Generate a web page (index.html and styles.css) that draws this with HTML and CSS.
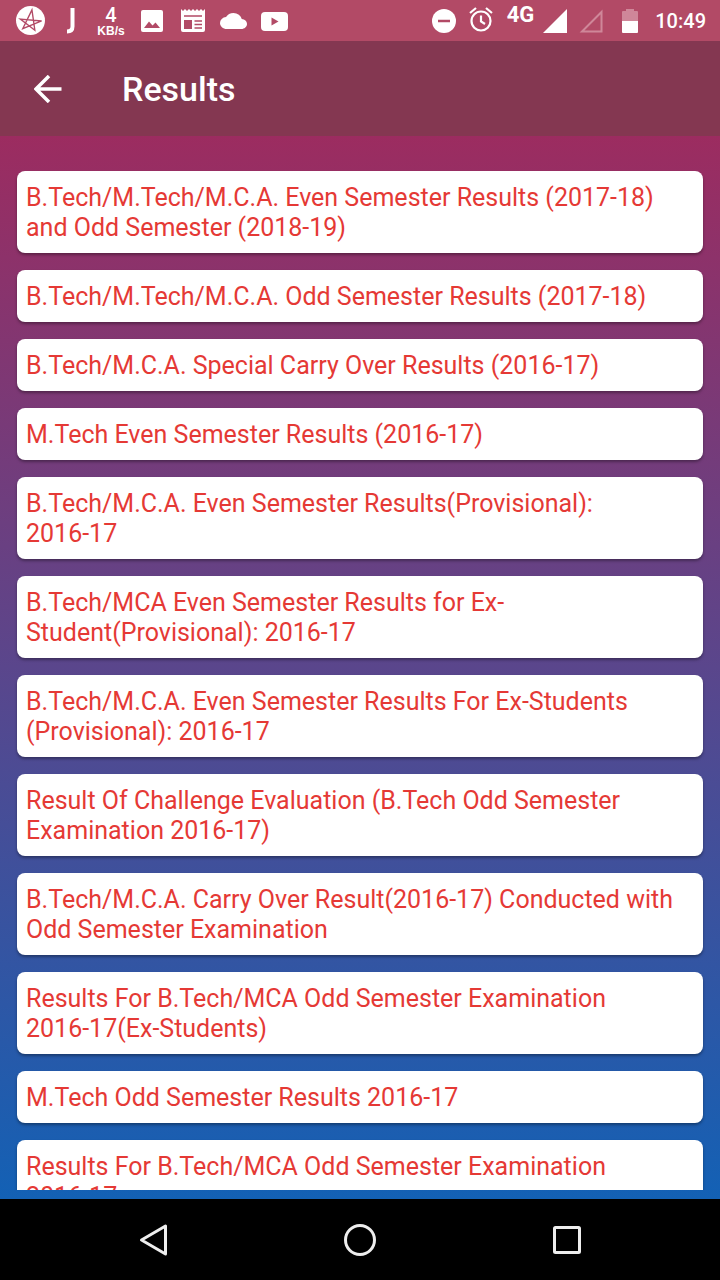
FILE: index.html
```html
<!DOCTYPE html>
<html lang="en">
<head>
<meta charset="utf-8">
<meta name="viewport" content="width=device-width, initial-scale=1">
<title>Results</title>
<link rel="stylesheet" href="styles.css">
</head>
<body>
<div class="screen">
  <div class="status-bar">
    <div class="status-left">
      <svg class="icon-app" viewBox="0 0 30 30" width="29" height="29" aria-hidden="true"><circle cx="15" cy="15" r="15" fill="#fff"/><path d="M16.500 4L19.500 25L4.500 13.500L26.500 15.500L7 23.500Z" fill="none" stroke="#b24a66" stroke-width="1.400"/></svg>
      <svg class="icon-j" viewBox="0 0 10 26" width="10" height="26" aria-hidden="true"><path d="M6.500 0V18.500Q6.500 23.500 1 23.500" fill="none" stroke="#fff" stroke-width="4"/></svg>
      <div class="speed"><span class="speed-value">4</span><span class="speed-unit">KB/s</span></div>
      <svg class="icon-picture" viewBox="0 0 22 22" width="22" height="22" aria-hidden="true"><rect width="22" height="22" rx="2" fill="#fff"/><path d="M3 18L8 11.500L11.500 15.500L14.500 12.500L19 18Z" fill="#b24a66"/></svg>
      <svg class="icon-news" viewBox="0 0 24 23" width="24" height="23" aria-hidden="true"><path d="M0 0L2 2L4 0L6 2L8 0L10 2L12 0L14 2L16 0L18 2L20 0L22 2L24 0V21Q24 23 22 23H2Q0 23 0 21Z" fill="#fff"/><path d="M3 7H21M13.500 12H21M13.500 15.500H21M13.500 19H21" stroke="#b24a66" stroke-width="1.500"/><rect x="3" y="11" width="8" height="9" fill="#b24a66"/></svg>
      <svg class="icon-cloud" viewBox="0 4 24 16" width="27" height="16" preserveAspectRatio="none" aria-hidden="true"><path d="M19.350 10.040A7.490 7.490 0 0 0 12 4C9.110 4 6.600 5.640 5.350 8.040A5.994 5.994 0 0 0 0 14c0 3.310 2.690 6 6 6h13c2.760 0 5-2.240 5-5 0-2.640-2.050-4.780-4.650-4.960z" fill="#fff"/></svg>
      <svg class="icon-video" viewBox="0 0 27 20" width="27" height="20" aria-hidden="true"><rect y="1" width="27" height="19" rx="4" fill="#fff"/><path d="M10.500 6.500V14.500L17.500 10.500Z" fill="#b24a66"/></svg>
    </div>
    <div class="status-right">
      <svg class="icon-dnd" viewBox="0 0 24 24" width="24" height="24" aria-hidden="true"><circle cx="12" cy="12" r="12" fill="#fff"/><path d="M6 12H18" stroke="#b24a66" stroke-width="2.500"/></svg>
      <svg class="icon-alarm" viewBox="0 0 24 25" width="24" height="25" aria-hidden="true"><g fill="none" stroke="#fff" stroke-width="2.200"><circle cx="12" cy="14" r="9.500"/><path d="M12 8.500V14.500L16 17M1 6L7 1M17 1L23 6"/></g></svg>
      <span class="network">4G</span>
      <svg class="icon-signal" viewBox="0 0 24 24" width="24" height="24" aria-hidden="true"><path d="M24 0V24H0Z" fill="#fff"/></svg>
      <svg class="icon-nosignal" viewBox="0 0 24 24" width="24" height="24" aria-hidden="true"><path d="M22.500 3V22.500H3Z" fill="none" stroke="#cf8799" stroke-width="2"/></svg>
      <svg class="icon-battery" viewBox="0 0 16 24" width="16" height="24" aria-hidden="true"><path d="M0 12V3Q0 2 1 2H4V0H12V2H15Q16 2 16 3V12Z" fill="#cf8799"/><path d="M0 12H16V23Q16 24 15 24H1Q0 24 0 23Z" fill="#fff"/></svg>
      <time class="clock">10:49</time>
    </div>
  </div>
  <header class="app-bar">
    <button class="back" type="button" aria-label="Back"><svg viewBox="0 0 28 28" width="28" height="28" aria-hidden="true"><path d="M27.500 14H2M15 1L2 14L15 27" fill="none" stroke="#fff" stroke-width="3.500"/></svg></button>
    <h1 class="title">Results</h1>
  </header>
  <main class="content">
    <ul class="list">
      <li><button class="card" type="button">B.Tech/M.Tech/M.C.A. Even Semester Results (2017-18) and Odd Semester (2018-19)</button></li>
      <li><button class="card" type="button">B.Tech/M.Tech/M.C.A. Odd Semester Results (2017-18)</button></li>
      <li><button class="card" type="button">B.Tech/M.C.A. Special Carry Over Results (2016-17)</button></li>
      <li><button class="card" type="button">M.Tech Even Semester Results (2016-17)</button></li>
      <li><button class="card" type="button">B.Tech/M.C.A. Even Semester Results(Provisional):<br>2016-17</button></li>
      <li><button class="card" type="button">B.Tech/MCA Even Semester Results for Ex-<br>Student(Provisional): 2016-17</button></li>
      <li><button class="card" type="button">B.Tech/M.C.A. Even Semester Results For Ex-Students (Provisional): 2016-17</button></li>
      <li><button class="card" type="button">Result Of Challenge Evaluation (B.Tech Odd Semester Examination 2016-17)</button></li>
      <li><button class="card" type="button">B.Tech/M.C.A. Carry Over Result(2016-17) Conducted with Odd Semester Examination</button></li>
      <li><button class="card" type="button">Results For B.Tech/MCA Odd Semester Examination<br>2016-17(Ex-Students)</button></li>
      <li><button class="card" type="button">M.Tech Odd Semester Results 2016-17</button></li>
      <li><button class="card" type="button">Results For B.Tech/MCA Odd Semester Examination<br>2016-17</button></li>
    </ul>
  </main>
  <nav class="nav-bar">
    <button class="nav-button" type="button" aria-label="Back"><svg viewBox="0 0 34 34" width="34" height="34" aria-hidden="true"><path d="M29.500 3V31L5.500 17Z" fill="none" stroke="#eee" stroke-width="3" stroke-linejoin="round"/></svg></button>
    <button class="nav-button" type="button" aria-label="Home"><svg viewBox="0 0 34 34" width="34" height="34" aria-hidden="true"><circle cx="17" cy="17" r="14.500" fill="none" stroke="#eee" stroke-width="3"/></svg></button>
    <button class="nav-button" type="button" aria-label="Recent apps"><svg viewBox="0 0 34 34" width="34" height="34" aria-hidden="true"><rect x="4.500" y="4.500" width="25" height="25" rx="1" fill="none" stroke="#eee" stroke-width="3"/></svg></button>
  </nav>
</div>
</body>
</html>
```
FILE: styles.css
```css
* { box-sizing: border-box; }
body { margin: 0; font-family: Roboto, "Liberation Sans", sans-serif; }
button { border: 0; padding: 0; background: none; font: inherit; color: inherit; }
svg { display: block; flex: none; }

.screen { display: flex; flex-direction: column; height: 100vh; }

.status-bar { display: flex; flex: none; justify-content: space-between; height: 41px; padding: 0 14px 0 16px; background: #b24a66; color: #fff; }
.status-left, .status-right { display: flex; align-items: center; }
.icon-j { margin-left: 21px; }
.speed { display: flex; flex-direction: column; align-items: center; width: 30px; margin-left: 20px; }
.speed-value { font-size: 20px; line-height: 20px; font-weight: 500; }
.speed-unit { font-family: "Liberation Sans", sans-serif; font-weight: 700; font-size: 12px; line-height: 12px; }
.icon-picture { margin-left: 15px; }
.icon-news { margin-left: 18px; }
.icon-cloud { margin-left: 15px; }
.icon-video { margin-left: 14px; }
.icon-alarm { margin-left: 13px; margin-bottom: 2px; }
.network { margin-left: 14px; padding-bottom: 12px; font-size: 22px; line-height: 24px; font-weight: 700; }
.icon-signal { margin-left: 9px; }
.icon-nosignal { margin-left: 12px; }
.icon-battery { margin-left: 19px; }
.clock { margin-left: 17px; font-size: 20px; line-height: 24px; font-weight: 500; }

.app-bar { display: flex; flex: none; align-items: center; gap: 60px; height: 95px; padding: 0 34px; background: #843751; color: #fff; }
.title { margin: 0; font-size: 34px; line-height: 40px; font-weight: 500; }

.content { flex: 1; min-height: 0; padding: 35px 17px 9px; background: linear-gradient(#9c2c60, #5a468c 50%, #1361b5); }
.list { display: flex; flex-direction: column; gap: 17px; height: 100%; margin: 0 -4px; padding: 0 4px; list-style: none; overflow: hidden; }
.card { display: block; width: 100%; padding: 12px 9px 10px; border-radius: 8px; background: #fff; box-shadow: 0 2px 3px rgba(0, 0, 0, 0.35); color: #e53935; font-size: 25px; line-height: 30px; text-align: left; }

.nav-bar { display: flex; flex: none; justify-content: center; gap: 173px; height: 81px; background: #000; }
.nav-button { display: flex; align-items: center; }
```
